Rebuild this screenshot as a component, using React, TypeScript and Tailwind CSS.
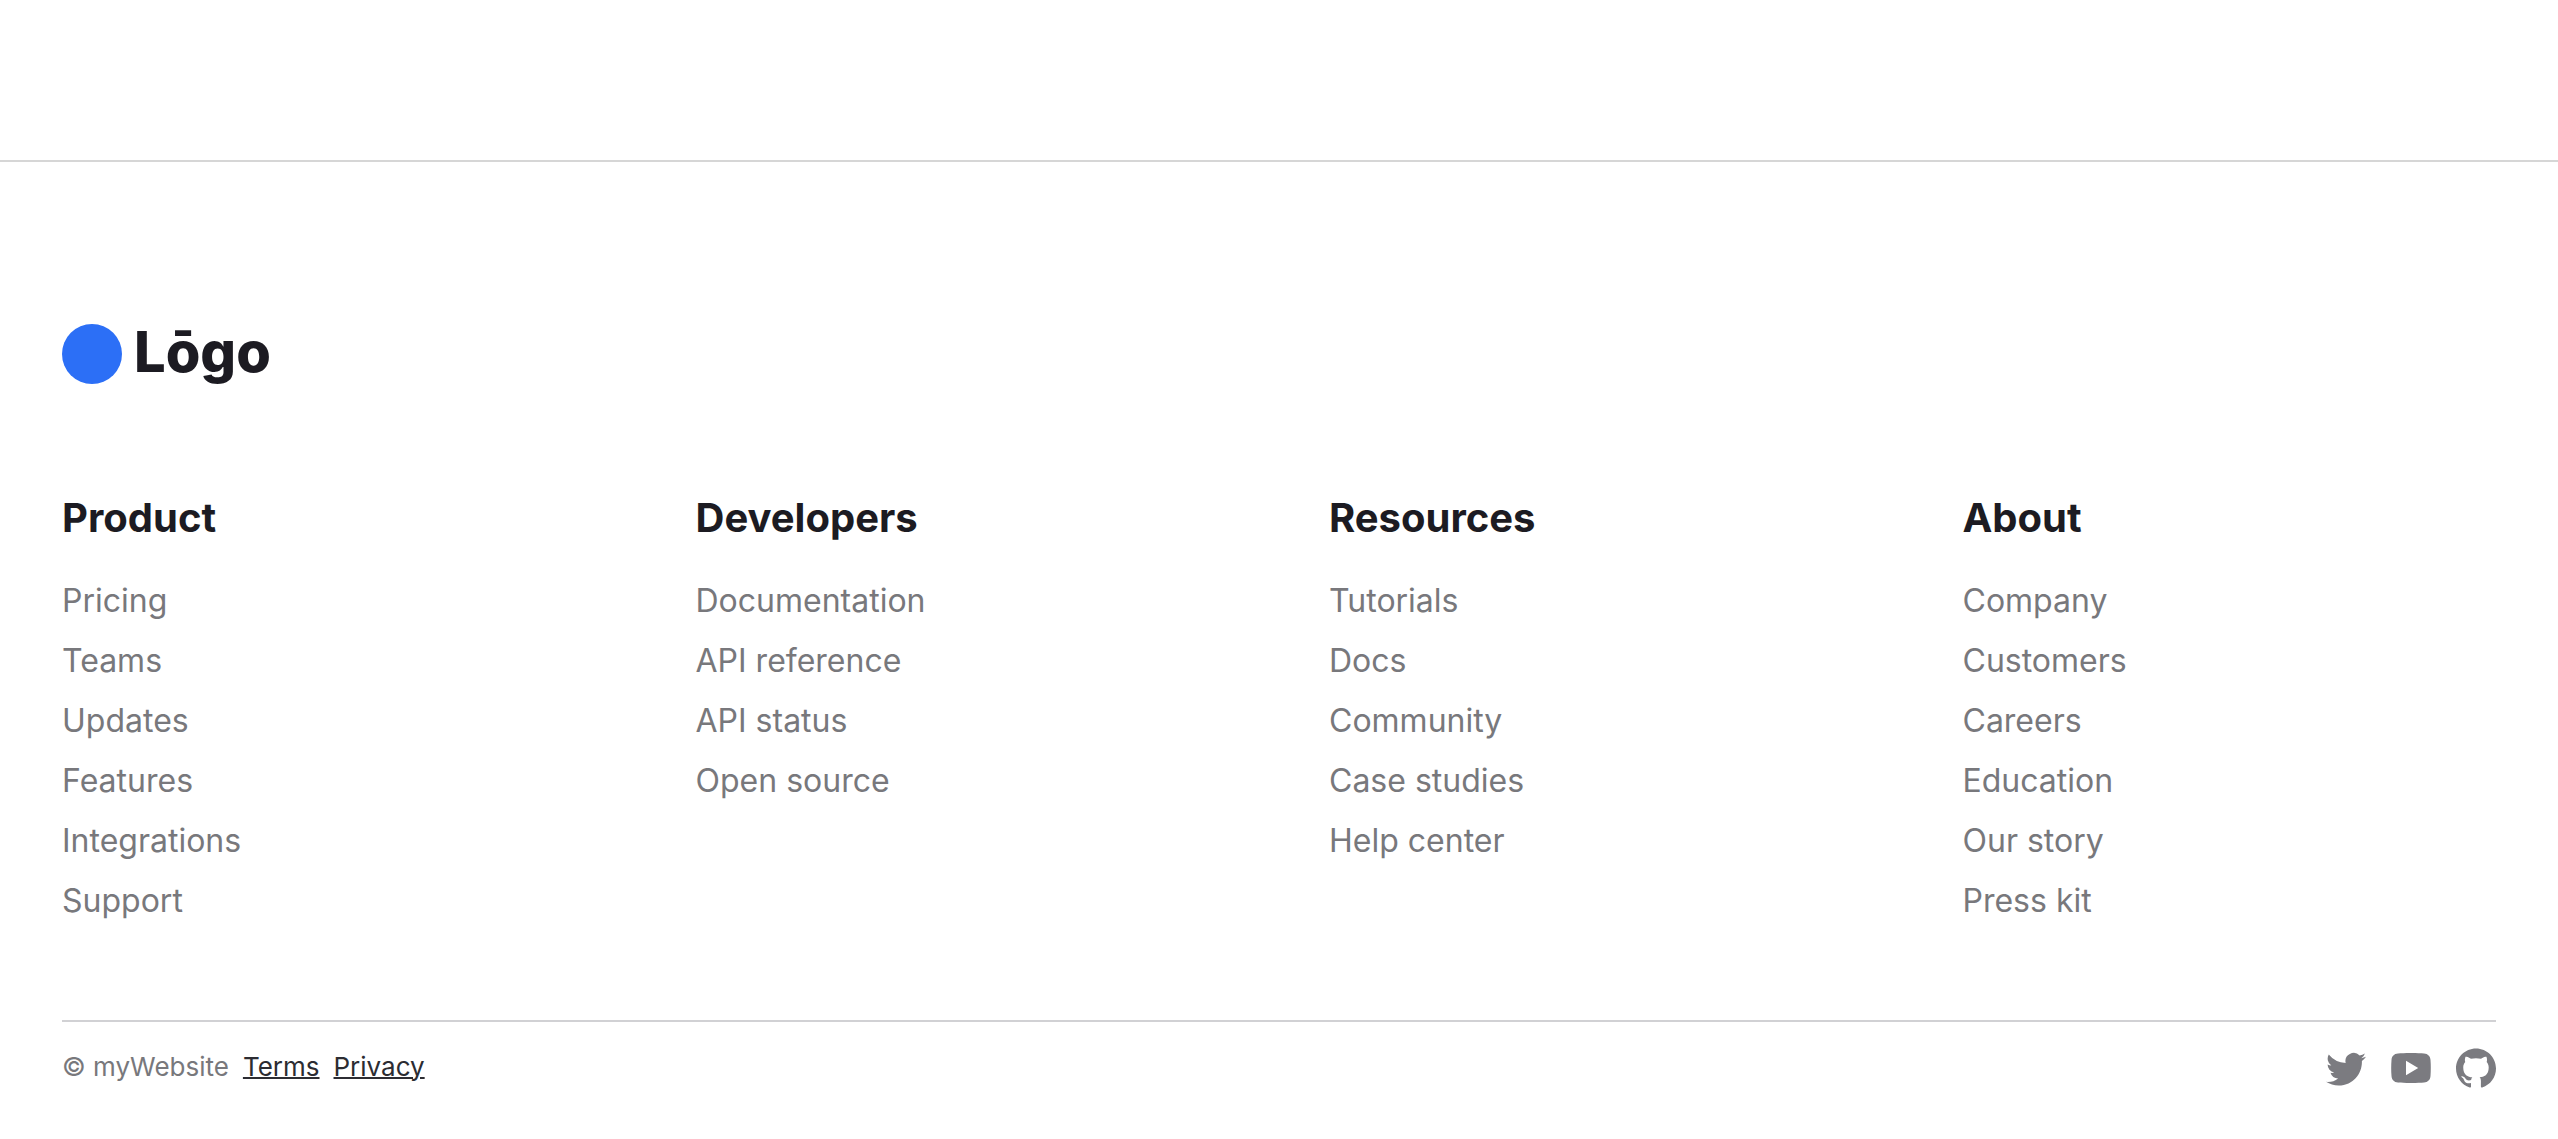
import { SiGithub } from "react-icons/si";
import { BsTwitter } from "react-icons/bs";

const columns = [
  { title: "Product", links: ["Pricing", "Teams", "Updates", "Features", "Integrations", "Support"] },
  { title: "Developers", links: ["Documentation", "API reference", "API status", "Open source"] },
  { title: "Resources", links: ["Tutorials", "Docs", "Community", "Case studies", "Help center"] },
  { title: "About", links: ["Company", "Customers", "Careers", "Education", "Our story", "Press kit"] },
];

function YouTubeIcon({ className }: { className?: string }) {
  return (
    <svg viewBox="0 0 40 40" className={className} fill="currentColor" aria-hidden="true">
      <path
        fillRule="evenodd"
        d="M20 5C14 5 10 5.200 7 5.500C3 5.900 .900 8 .500 12C.100 17 .100 23 .500 28C.900 32 3 34.100 7 34.500C10 34.800 14 35 20 35S30 34.800 33 34.500C37 34.100 39.100 32 39.500 28C39.900 23 39.900 17 39.500 12C39.100 8 37 5.900 33 5.500C30 5.200 26 5 20 5ZM15 12.700L27.200 20L15 27.300Z"
      />
    </svg>
  );
}

const socials = [
  { name: "Twitter", Icon: BsTwitter },
  { name: "YouTube", Icon: YouTubeIcon },
  { name: "GitHub", Icon: SiGithub },
];

export default function App() {
  return (
    <div className="bg-white pt-40 font-['Inter',sans-serif] text-[#1c1b22]">
      <footer className="border-t-2 border-[#d6d6d6] px-[62px] pt-[162px] pb-[50px]">
        <a href="#" className="flex w-fit items-center gap-3">
          <span className="size-[60px] rounded-full bg-[#2c6ff6]" />
          <span className="pb-1 text-[56px] leading-[56px] font-extrabold">Lōgo</span>
        </a>
        <div className="mt-[104px] grid grid-cols-4 gap-x-[100px]">
          {columns.map((c) => (
            <nav key={c.title} aria-label={c.title}>
              <h2 className="text-[40px] leading-[60px] font-bold">{c.title}</h2>
              <ul className="mt-[23px] text-[32px] leading-[60px] text-[#78787c]">
                {c.links.map((l) => (
                  <li key={l}><a href="#">{l}</a></li>
                ))}
              </ul>
            </nav>
          ))}
        </div>
        <div className="mt-[89px] flex items-start justify-between border-t-2 border-[#d1d1d4] pt-[26px]">
          <div className="flex gap-[14px] text-[26px] leading-[38px] text-[#78787c]">
            <span>© myWebsite</span>
            <a href="#" className="text-[#2c2c32] underline decoration-2">Terms</a>
            <a href="#" className="text-[#2c2c32] underline decoration-2">Privacy</a>
          </div>
          <div className="flex gap-[25px] text-[#7b7b80]">
            {socials.map(({ name, Icon }) => (
              <a key={name} href="#" aria-label={name}>
                <Icon className="size-10" />
              </a>
            ))}
          </div>
        </div>
      </footer>
    </div>
  );
}
